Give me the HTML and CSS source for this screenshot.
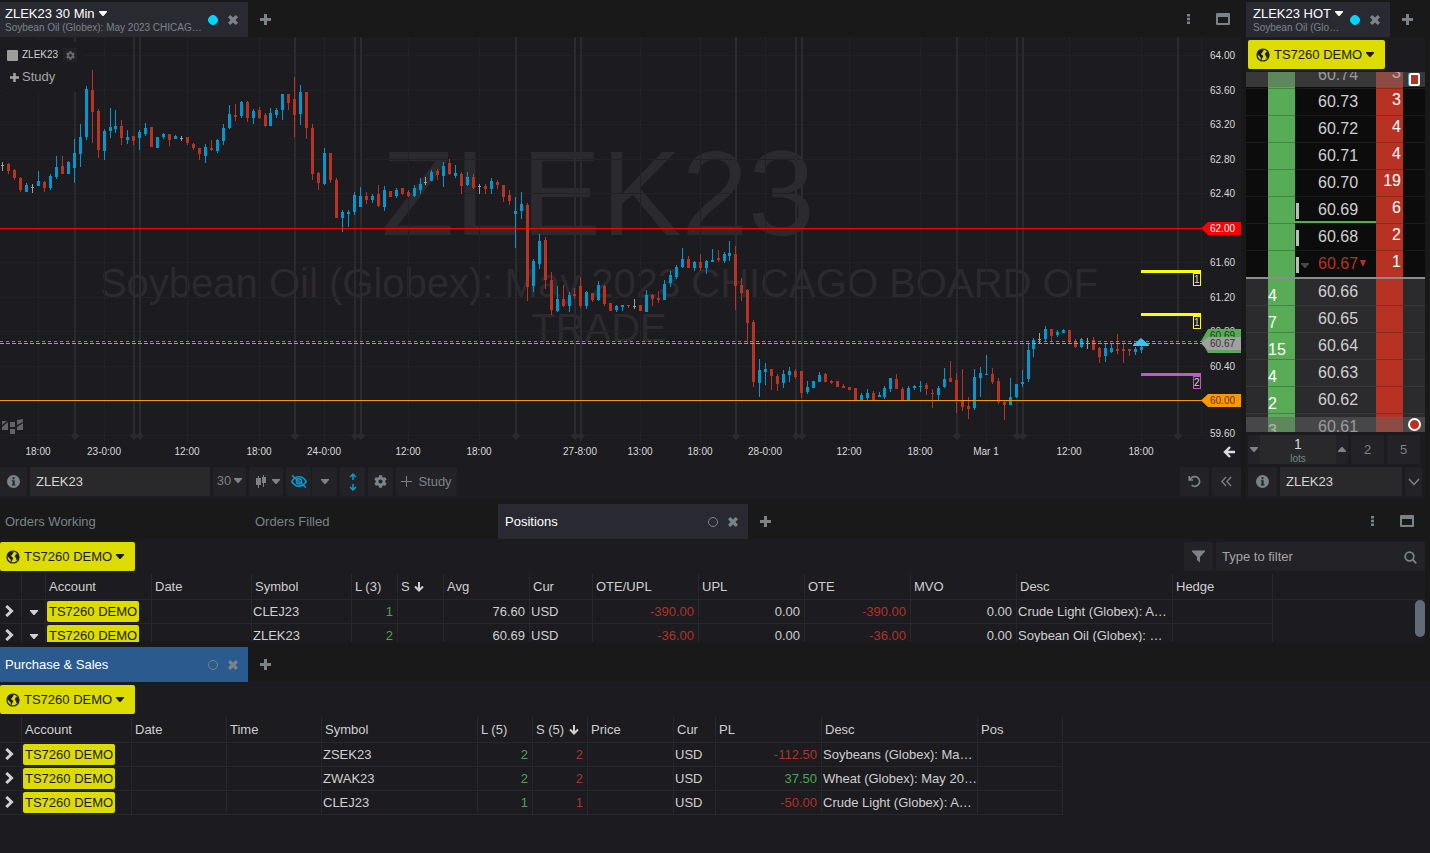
FILE: index.html
```html
<!DOCTYPE html>
<html lang="en">
<head>
    <meta charset="utf-8">
    <meta name="viewport" content="width=device-width, initial-scale=1.0">
    <title>ZLEK23 Workspace</title>
    <link rel="stylesheet" href="styles.css">
</head>

<body>
    <!-- shared icons -->
    <svg class="sprite" aria-hidden="true">
        <symbol id="i-caret" viewBox="0 0 8 5"><path d="M0 0h8v1L4.5 5h-1L0 1z"/></symbol>
        <symbol id="i-tick" viewBox="0 0 6 6"><path d="M0 0h6L3.500 6h-1z"/></symbol>
        <symbol id="i-close" viewBox="0 0 10 10"><path d="M2.2 0 5 2.6 7.8 0 10 2.2 7.4 5 10 7.8 7.8 10 5 7.4 2.2 10 0 7.8 2.6 5 0 2.2z"/></symbol>
        <symbol id="i-plus" viewBox="0 0 11 11"><path d="M4 0h3v4h4v3H7v4H4V7H0V4h4z"/></symbol>
        <symbol id="i-dots" viewBox="0 0 4 12"><path d="M0 1h3v2.500H0zM0 4.800h3v2.500H0zM0 8.500h3V11H0z"/></symbol>
        <symbol id="i-window" viewBox="0 0 14 12"><path fill-rule="evenodd" d="M1 0h12q1 0 1 1v10q0 1-1 1H1q-1 0-1-1V1q0-1 1-1zM2 4v6h10V4z"/></symbol>
        <symbol id="i-globe" viewBox="0 0 14 14"><circle cx="7" cy="7" r="6" fill="none" stroke="currentColor" stroke-width="1.200"/><path d="M2 3.500 4.600 1.400 7.200 1.600 7.600 2.800 6.400 4 5.800 5.300 4.500 6 6.300 7 7.300 8.300 6.400 9.800 5.500 12 4.800 11.400 4.500 9.200 2.800 7.800 1.300 5.800zM9.300 5l1.700-1.500 1.700 2 .1 2.400-1.500 2.300-.9-.3-.3-2-1.300-1.200z"/></symbol>
        <symbol id="i-gear" viewBox="0 0 512 512"><path d="M487.400 315.700l-42.600-24.600c4.300-23.200 4.300-47 0-70.200l42.600-24.600c4.900-2.800 7.100-8.600 5.500-14-11.100-35.600-30-67.800-54.700-94.600-3.800-4.100-10-5.100-14.800-2.300L380.800 110c-17.900-15.400-38.500-27.300-60.800-35.100V25.800c0-5.600-3.900-10.500-9.400-11.700-36.700-8.200-74.300-7.800-109.200 0-5.500 1.200-9.400 6.100-9.400 11.700V75c-22.200 7.900-42.800 19.800-60.800 35.100L88.700 85.500c-4.900-2.800-11-1.900-14.800 2.300-24.700 26.700-43.600 58.900-54.700 94.600-1.700 5.400.6 11.200 5.500 14L67.300 221c-4.300 23.200-4.300 47 0 70.200l-42.600 24.600c-4.900 2.800-7.100 8.600-5.500 14 11.100 35.600 30 67.800 54.700 94.600 3.800 4.100 10 5.100 14.800 2.300l42.600-24.600c17.900 15.400 38.500 27.300 60.800 35.100v49.200c0 5.600 3.900 10.500 9.400 11.700 36.700 8.200 74.300 7.800 109.200 0 5.500-1.200 9.400-6.100 9.400-11.700v-49.200c22.200-7.900 42.800-19.800 60.800-35.100l42.600 24.600c4.900 2.800 11 1.900 14.800-2.300 24.700-26.700 43.600-58.900 54.700-94.600 1.500-5.500-.7-11.300-5.600-14.100zM256 336c-44.100 0-80-35.900-80-80s35.900-80 80-80 80 35.900 80 80-35.900 80-80 80z"/></symbol>
        <symbol id="i-info" viewBox="0 0 13 13"><path fill-rule="evenodd" d="M6.500 0a6.500 6.500 0 1 1 0 13 6.500 6.500 0 0 1 0-13zM5.500 2.300v2h2v-2zM4.800 5.300v1h.8v3h-.8v1.200h3.600V9.300h-.8v-4z"/></symbol>
        <symbol id="i-candles" viewBox="0 0 10 13"><path d="M2 1h1v2h2v7H3v3H2v-3H0V3h2zM7 0h1v2h2v6H8v4H7V8H6V2h1z"/></symbol>
        <symbol id="i-eye" viewBox="0 0 16 13"><g fill="none" stroke="currentColor" stroke-width="1.600"><path d="M.8 6.500C3 2.900 5.300 1.800 8 1.800s5 1.100 7.200 4.700C13 10.100 10.700 11.200 8 11.200S3 10.100.8 6.500z"/><circle cx="8" cy="6.300" r="2.600"/><path d="M1 .5l14 12"/></g></symbol>
        <symbol id="i-updown" viewBox="0 0 8 18"><path d="M4 0l3.500 3.500-1 1L4.800 3v4H3.200V3L1.500 4.500l-1-1zM4 18l3.500-3.500-1-1L4.800 15v-4H3.200v4l-1.700-1.500-1 1z"/></symbol>
        <symbol id="i-undo" viewBox="0 0 13 13"><path d="M1.200 1v4h4M1.600 4.800C3 2.300 5.200 1.500 7.200 1.700a4.800 4.800 0 1 1-3.600 8.400" fill="none" stroke="currentColor" stroke-width="1.700"/></symbol>
        <symbol id="i-rewind" viewBox="0 0 11 10"><path d="M5 .5.900 5 5 9.500M10 .5 5.900 5 10 9.500" fill="none" stroke="currentColor" stroke-width="1.300"/></symbol>
        <symbol id="i-thin-plus" viewBox="0 0 11 11"><path d="M5 0h1v5h5v1H6v5H5V6H0V5h5z"/></symbol>
        <symbol id="i-chevron" viewBox="0 0 12 8"><path d="M1 1l5 5.500L11 1" fill="none" stroke="currentColor" stroke-width="1.500"/></symbol>
        <symbol id="i-expand" viewBox="0 0 9 12"><path d="M1.300 1l5.200 5-5.200 5" fill="none" stroke="currentColor" stroke-width="3"/></symbol>
        <symbol id="i-sort" viewBox="0 0 10 10"><path d="M5 0v8.500M1 4.500l4 4 4-4" fill="none" stroke="currentColor" stroke-width="2"/></symbol>
        <symbol id="i-filter" viewBox="0 0 13 12"><path d="M0 0h13v1L8 6.500V12L5 9.500v-3L0 1z"/></symbol>
        <symbol id="i-search" viewBox="0 0 13 13"><g fill="none" stroke="currentColor" stroke-width="1.800"><circle cx="5.500" cy="5.500" r="4.300"/><path d="M8.700 8.700 12.300 12.300"/></g></symbol>
    </svg>

    <div class="top">
        <section class="chart-panel">
            <div class="tabs">
                <div class="tab active">
                    <button class="tab-title">
                        <span>ZLEK23 30 Min <svg class="caret"><use href="#i-caret"/></svg></span>
                        <small>Soybean Oil (Globex): May 2023 CHICAGO BOARD OF TRADE</small>
                    </button>
                    <span class="link-dot on"></span>
                    <button class="close" aria-label="Close"><svg><use href="#i-close"/></svg></button>
                </div>
                <button class="add" aria-label="Add tab"><svg><use href="#i-plus"/></svg></button>
                <div class="tab-tools">
                    <button aria-label="More"><svg class="dots"><use href="#i-dots"/></svg></button>
                    <button aria-label="Window"><svg class="window"><use href="#i-window"/></svg></button>
                </div>
            </div>

            <div class="chart">
                <svg id="chart" viewBox="0 37 1241 427" role="img" aria-label="ZLEK23 30 minute chart"></svg>
                <div class="legend">
                    <div class="legend-symbol">
                        <span class="swatch"></span>ZLEK23
                        <button aria-label="Series settings"><svg><use href="#i-gear"/></svg></button>
                    </div>
                    <button class="legend-study"><svg><use href="#i-plus"/></svg>Study</button>
                </div>
            </div>

            <div class="toolbar">
                <button class="tool info" aria-label="Info"><svg><use href="#i-info"/></svg></button>
                <input class="symbol" type="text" value="ZLEK23" aria-label="Symbol">
                <button class="tool interval">30 <svg class="caret"><use href="#i-caret"/></svg></button>
                <button class="tool type" aria-label="Chart type"><svg class="candles"><use href="#i-candles"/></svg><svg class="caret"><use href="#i-caret"/></svg></button>
                <div class="split">
                    <button class="tool blue" aria-label="Hide drawings"><svg class="eye"><use href="#i-eye"/></svg></button>
                    <button class="tool" aria-label="Drawing options"><svg class="caret"><use href="#i-caret"/></svg></button>
                </div>
                <button class="tool small blue" aria-label="Fit scale"><svg class="updown"><use href="#i-updown"/></svg></button>
                <button class="tool small" aria-label="Settings"><svg><use href="#i-gear"/></svg></button>
                <button class="tool study"><svg class="thin"><use href="#i-thin-plus"/></svg>Study</button>
                <div class="toolbar-right">
                    <button class="tool" aria-label="Undo"><svg><use href="#i-undo"/></svg></button>
                    <button class="tool" aria-label="Collapse"><svg class="thin"><use href="#i-rewind"/></svg></button>
                </div>
            </div>
        </section>

        <section class="ladder-panel">
            <div class="tabs">
                <div class="tab active">
                    <button class="tab-title">
                        <span>ZLEK23 HOT <svg class="caret"><use href="#i-caret"/></svg></span>
                        <small>Soybean Oil (Globex): May 2023 CHICAGO BOARD OF TRADE</small>
                    </button>
                    <span class="link-dot on"></span>
                    <button class="close" aria-label="Close"><svg><use href="#i-close"/></svg></button>
                </div>
                <button class="add" aria-label="Add tab"><svg><use href="#i-plus"/></svg></button>
            </div>
            <div class="account-bar">
                <button class="account"><svg class="globe"><use href="#i-globe"/></svg>TS7260 DEMO<svg class="caret"><use href="#i-caret"/></svg></button>
            </div>
            <div class="ladder">
                <table><tbody id="ladder"></tbody></table>
                <div class="band band-top"><span class="mark-square"></span></div>
                <div class="band band-bottom"><span class="mark-round"></span></div>
            </div>
            <div class="toolbar lots-bar">
                <div class="lots">
                    <button aria-label="Fewer lots"><svg class="caret"><use href="#i-caret"/></svg></button>
                    <div class="lots-value"><b>1</b><small>lots</small></div>
                    <button aria-label="More lots"><svg class="caret up"><use href="#i-caret"/></svg></button>
                </div>
                <button class="tool">2</button>
                <button class="tool">5</button>
            </div>
            <div class="toolbar symbol-bar">
                <button class="tool" aria-label="Info"><svg><use href="#i-info"/></svg></button>
                <input class="symbol" type="text" value="ZLEK23" aria-label="Ladder symbol">
                <button class="tool expand" aria-label="Expand"><svg class="chevron"><use href="#i-chevron"/></svg></button>
            </div>
        </section>
    </div>

    <section class="positions">
        <div class="tabs">
            <div class="tab"><button class="tab-title">Orders Working</button></div>
            <div class="tab"><button class="tab-title">Orders Filled</button></div>
            <div class="tab active">
                <button class="tab-title">Positions</button>
                <span class="link-dot"></span>
                <button class="close" aria-label="Close"><svg><use href="#i-close"/></svg></button>
            </div>
            <button class="add" aria-label="Add tab"><svg><use href="#i-plus"/></svg></button>
            <div class="tab-tools">
                <button aria-label="More"><svg class="dots"><use href="#i-dots"/></svg></button>
                <button aria-label="Window"><svg class="window"><use href="#i-window"/></svg></button>
            </div>
        </div>
        <div class="account-bar">
            <button class="account"><svg class="globe"><use href="#i-globe"/></svg>TS7260 DEMO<svg class="caret"><use href="#i-caret"/></svg></button>
            <div class="filter">
                <button class="tool" aria-label="Filter"><svg><use href="#i-filter"/></svg></button>
                <div class="search">
                    <input type="text" placeholder="Type to filter" aria-label="Type to filter">
                    <svg><use href="#i-search"/></svg>
                </div>
            </div>
        </div>
        <div class="grid-view">
            <table class="grid">
                <colgroup>
                    <col class="w22"><col class="w24"><col class="w106"><col class="w100"><col class="w100"><col class="w46"><col class="w46"><col class="w86"><col class="w63"><col class="w106"><col class="w106"><col class="w106"><col class="w106"><col class="w156"><col class="w100"><col>
                </colgroup>
                <thead>
                    <tr><th></th><th></th><th>Account</th><th>Date</th><th>Symbol</th><th>L (3)</th><th>S <svg class="sort"><use href="#i-sort"/></svg></th><th>Avg</th><th>Cur</th><th>OTE/UPL</th><th>UPL</th><th>OTE</th><th>MVO</th><th>Desc</th><th>Hedge</th><th></th></tr>
                </thead>
                <tbody>
                    <tr>
                        <td><button class="row-open" aria-label="Expand"><svg><use href="#i-expand"/></svg></button></td>
                        <td><button class="row-menu" aria-label="Menu"><svg class="caret"><use href="#i-caret"/></svg></button></td>
                        <td><span class="tag">TS7260 DEMO</span></td><td></td><td>CLEJ23</td><td class="num up">1</td><td></td><td class="num">76.60</td><td>USD</td><td class="num down">-390.00</td><td class="num">0.00</td><td class="num down">-390.00</td><td class="num">0.00</td><td>Crude Light (Globex): April 2023</td><td></td><td></td>
                    </tr>
                    <tr>
                        <td><button class="row-open" aria-label="Expand"><svg><use href="#i-expand"/></svg></button></td>
                        <td><button class="row-menu" aria-label="Menu"><svg class="caret"><use href="#i-caret"/></svg></button></td>
                        <td><span class="tag">TS7260 DEMO</span></td><td></td><td>ZLEK23</td><td class="num up">2</td><td></td><td class="num">60.69</td><td>USD</td><td class="num down">-36.00</td><td class="num">0.00</td><td class="num down">-36.00</td><td class="num">0.00</td><td>Soybean Oil (Globex): May 2023</td><td></td><td></td>
                    </tr>
                </tbody>
            </table>
            <div class="scroll-thumb"></div>
        </div>
    </section>

    <section class="sales">
        <div class="tabs">
            <div class="tab focused">
                <button class="tab-title">Purchase &amp; Sales</button>
                <span class="link-dot"></span>
                <button class="close" aria-label="Close"><svg><use href="#i-close"/></svg></button>
            </div>
            <button class="add" aria-label="Add tab"><svg><use href="#i-plus"/></svg></button>
        </div>
        <div class="account-bar">
            <button class="account"><svg class="globe"><use href="#i-globe"/></svg>TS7260 DEMO<svg class="caret"><use href="#i-caret"/></svg></button>
        </div>
        <table class="grid">
            <colgroup>
                <col class="w22"><col class="w110"><col class="w95"><col class="w95"><col class="w156"><col class="w55"><col class="w55"><col class="w86"><col class="w42"><col class="w106"><col class="w156"><col class="w85"><col>
            </colgroup>
            <thead>
                <tr><th></th><th>Account</th><th>Date</th><th>Time</th><th>Symbol</th><th>L (5)</th><th>S (5) <svg class="sort"><use href="#i-sort"/></svg></th><th>Price</th><th>Cur</th><th>PL</th><th>Desc</th><th>Pos</th><th></th></tr>
            </thead>
            <tbody>
                <tr>
                    <td><button class="row-open" aria-label="Expand"><svg><use href="#i-expand"/></svg></button></td>
                    <td><span class="tag">TS7260 DEMO</span></td><td></td><td></td><td>ZSEK23</td><td class="num up">2</td><td class="num down">2</td><td></td><td>USD</td><td class="num down">-112.50</td><td>Soybeans (Globex): May 2023</td><td></td><td></td>
                </tr>
                <tr>
                    <td><button class="row-open" aria-label="Expand"><svg><use href="#i-expand"/></svg></button></td>
                    <td><span class="tag">TS7260 DEMO</span></td><td></td><td></td><td>ZWAK23</td><td class="num up">2</td><td class="num down">2</td><td></td><td>USD</td><td class="num up">37.50</td><td>Wheat (Globex): May 2023</td><td></td><td></td>
                </tr>
                <tr>
                    <td><button class="row-open" aria-label="Expand"><svg><use href="#i-expand"/></svg></button></td>
                    <td><span class="tag">TS7260 DEMO</span></td><td></td><td></td><td>CLEJ23</td><td class="num up">1</td><td class="num down">1</td><td></td><td>USD</td><td class="num down">-50.00</td><td>Crude Light (Globex): April 2023</td><td></td><td></td>
                </tr>
            </tbody>
        </table>
    </section>

    <script src="chart.js"></script>
</body>

</html>
```
FILE: styles.css
```css
* {
    box-sizing: border-box;
}

body {
    margin: 0;
    min-height: 100vh;
    padding-top: 2px;
    display: flex;
    flex-direction: column;
    background-color: #19191a;
    color: #d0d0d0;
    font-family: "Liberation Sans", Arial, sans-serif;
    font-size: 13px;
    line-height: 16px;
}

button, input {
    margin: 0;
    padding: 0;
    border: 0;
    background: none;
    color: inherit;
    font: inherit;
}

small {
    font-size: 10px;
    line-height: 12px;
}

svg {
    fill: currentColor;
    flex: none;
}

.sprite {
    display: none;
}

.caret {
    width: 8px;
    height: 5px;
}

/* ---------- tabs ---------- */

.tabs {
    display: flex;
    height: 35px;
    color: #7b8388;
}

.tab {
    display: flex;
    align-items: center;
    width: 250px;
    padding: 0 10px 0 7px;
}

.tab:first-child {
    width: 248px;
    padding-left: 5px;
}

.tab.active {
    background-color: #292932;
}

.tab.focused {
    background-color: #2b5a8f;
}

.tab-title {
    flex: 1;
    min-width: 0;
    text-align: left;
}

.active .tab-title, .focused .tab-title {
    color: #fff;
}

.tab-title span, .tab-title small {
    display: block;
    white-space: nowrap;
    overflow: hidden;
    text-overflow: ellipsis;
}

.tab-title small {
    color: #7b8388;
}

.tab-title .caret {
    margin: 0 0 2px 1px;
}

.link-dot {
    width: 10px;
    height: 10px;
    margin: 0 10px 0 6px;
    border: 1px solid #7b8388;
    border-radius: 50%;
}

.link-dot.on {
    border-color: #00d5ff;
    background-color: #00d5ff;
}

.close, .add, .tab-tools button {
    display: flex;
    align-items: center;
}

.close svg {
    width: 10px;
    height: 10px;
}

.add {
    padding: 0 12px 1px;
}

.add svg {
    width: 11px;
    height: 11px;
}

.tab-tools {
    display: flex;
    gap: 25px;
    margin-left: auto;
    padding: 0 11px 1px 0;
}

.dots {
    width: 4px;
    height: 12px;
}

.window {
    width: 14px;
    height: 12px;
}

/* ---------- chart ---------- */

.top {
    display: flex;
    gap: 5px;
    padding-right: 5px;
}

.chart-panel {
    flex: 1;
    min-width: 0;
}

.chart {
    position: relative;
    background-color: #1c1b1f;
}

#chart {
    display: block;
    width: 100%;
    font-size: 10px;
    fill: #dadada;
}

.mark-big, .mark-small {
    font-size: 120px;
    fill: #2b2a2e;
    text-anchor: middle;
}

.mark-small {
    font-size: 40px;
}

.time {
    text-anchor: middle;
}

.shape {
    shape-rendering: crispEdges;
}

.legend {
    position: absolute;
    left: 3px;
    top: 5px;
    width: 80px;
    height: 50px;
    padding: 6px 0 0 4px;
    background-color: #1c1b1f;
}

.legend-symbol {
    display: flex;
    align-items: center;
    height: 14px;
    font-size: 10px;
}

.swatch {
    width: 11px;
    height: 11px;
    margin-right: 4px;
    border-radius: 1px;
    background-color: #9d9d9d;
}

.legend-symbol button {
    display: flex;
    align-items: center;
    justify-content: center;
    width: 14px;
    height: 14px;
    margin-left: 5px;
    background-color: #222126;
    color: #66696d;
}

.legend-symbol svg, .legend-study svg {
    width: 9px;
    height: 9px;
}

.legend-study {
    display: flex;
    align-items: center;
    gap: 3px;
    padding: 7px 3px;
    color: #a5a5a5;
}

/* ---------- toolbars ---------- */

.toolbar {
    display: flex;
    gap: 3px;
    padding: 3px 0;
    background-color: #1c1b1f;
    color: #7b8388;
}

.tool {
    display: flex;
    align-items: center;
    justify-content: center;
    width: 29px;
    height: 29px;
    border-radius: 2px;
    background-color: #232227;
}

.tool svg {
    width: 13px;
    height: 13px;
}

.tool .caret {
    width: 8px;
    height: 5px;
}

.tool .eye {
    width: 16px;
}

.tool .updown {
    width: 8px;
    height: 18px;
}

.tool .candles {
    width: 10px;
}

.tool .thin {
    width: 11px;
    height: 11px;
}

.tool.info {
    width: 27px;
}

.tool.small, .split .tool {
    width: 25px;
}

.tool.interval {
    width: 33px;
    gap: 3px;
    padding-bottom: 2px;
}

.tool.type {
    width: 34px;
    gap: 6px;
    padding-left: 3px;
}

.tool.study {
    width: 61px;
    gap: 6px;
}

.blue {
    color: #0c99cd;
}

.split {
    display: flex;
    gap: 1px;
}

.toolbar-right {
    display: flex;
    gap: 3px;
    margin-left: auto;
}

.symbol {
    width: 180px;
    height: 29px;
    padding: 0 6px;
    border-radius: 1px;
    background-color: #29292b;
    color: #d5d5d5;
}

/* ---------- price ladder ---------- */

.ladder-panel {
    width: 179px;
    background-color: #1c1b1f;
}

.ladder-panel .tabs {
    background-color: #19191a;
}

.ladder-panel .tab {
    width: 144px;
    padding-left: 7px;
}

.account-bar {
    display: flex;
    padding: 3px 0;
    background-color: #1c1b1f;
}

.ladder-panel .account-bar {
    padding-left: 2px;
}

.account {
    display: flex;
    align-items: center;
    height: 29px;
    padding: 0 11px 0 6px;
    border-radius: 2px;
    background-color: #dcdc00;
    color: #1c1b1f;
}

.ladder-panel .account {
    padding-left: 8px;
}

.account .caret {
    margin-left: 4px;
}

.globe {
    width: 14px;
    height: 14px;
    margin-right: 4px;
}

.ladder {
    position: relative;
    height: 360px;
    overflow: hidden;
}

.ladder table {
    width: 100%;
    margin-top: -10px;
    table-layout: fixed;
    border-spacing: 0;
    font-size: 16px;
    line-height: 18px;
}

.ladder td {
    height: 27px;
    padding: 0;
    border-bottom: 1px solid #1b1b1d;
    background-color: #0c0c0d;
}

.ladder .bid-row td {
    border-color: #38383b;
    background-color: #2b2b2e;
}

.ladder .bid, .ladder .bid-row .bid {
    width: 27px;
    padding-top: 8px;
    border-color: #43863f;
    background-color: #57ac55;
    color: #fff;
}

.ladder .ask, .ladder .bid-row .ask {
    width: 27px;
    padding: 0 2px 5px 0;
    border-color: #8f281c;
    background-color: #b83223;
    color: #fff;
    text-align: right;
}

.ladder .price {
    position: relative;
    width: 81px;
    padding-left: 23px;
}

.ladder .volume {
    background-image: linear-gradient(#bbb, #bbb);
    background-position: 1px 6px;
    background-size: 3px 16px;
    background-repeat: no-repeat;
}

.ladder .high {
    box-shadow: inset 0 -2px #57ac55;
}

.ladder .last-row td {
    height: 28px;
    border-bottom: 2px solid #8c8c8c;
}

.ladder .last {
    color: #b83223;
}

.last .tick {
    width: 6px;
    height: 6px;
    margin: 0 0 3px 2px;
}

.last .caret {
    position: absolute;
    left: 6px;
    top: 12px;
    color: #45484b;
}

.band {
    position: absolute;
    left: 0;
    right: 0;
    height: 15px;
    background-color: rgba(100, 100, 100, 0.5);
}

.band-top {
    top: 0;
}

.band-bottom {
    bottom: 0;
}

.mark-square, .mark-round {
    position: absolute;
    right: 5px;
    top: 1px;
    width: 11px;
    height: 13px;
    border: 2px solid #fff;
    border-radius: 2px;
    background-color: #b83223;
    box-shadow: -1px 0 #2aa9c4;
}

.mark-round {
    right: 4px;
    width: 13px;
    border-radius: 50%;
    box-shadow: none;
}

.lots-bar, .symbol-bar {
    padding-left: 2px;
}

.symbol-bar {
    padding-top: 0;
}

.lots-bar .tool {
    width: 33px;
}

.lots {
    display: flex;
    width: 100px;
    height: 29px;
    border-radius: 2px;
    background-color: #232227;
}

.lots button {
    display: flex;
    align-items: center;
    justify-content: center;
    width: 12px;
}

.lots .up {
    transform: rotate(180deg);
}

.lots-value {
    display: flex;
    flex: 1;
    flex-direction: column;
    align-items: center;
    background-color: #29292b;
}

.lots-value b {
    height: 18px;
    color: #d5d5d5;
    font-size: 14px;
    font-weight: normal;
    line-height: 18px;
}

.symbol-bar .symbol {
    width: 122px;
}

.tool.expand {
    width: 17px;
}

.tool .chevron {
    width: 12px;
    height: 8px;
}

/* ---------- grids ---------- */

.positions, .sales {
    margin: 5px 5px 0 0;
}

.sales {
    flex: 1;
    display: flex;
    flex-direction: column;
    margin-right: 0;
    background-color: #1c1b1f;
}

.sales .tabs {
    background-color: #19191a;
}

.filter {
    display: flex;
    gap: 3px;
    margin-left: auto;
    color: #7b8388;
}

.search {
    position: relative;
}

.search input {
    width: 209px;
    height: 29px;
    padding: 0 30px 0 6px;
    border-radius: 2px;
    background-color: #232227;
}

.search input::placeholder {
    color: #a5a5a5;
    opacity: 1;
}

.search svg {
    position: absolute;
    right: 8px;
    top: 9px;
    width: 13px;
    height: 13px;
}

.grid-view {
    position: relative;
    height: 68px;
    overflow: hidden;
    background-color: #1c1b1f;
}

.scroll-thumb {
    position: absolute;
    right: 0;
    top: 26px;
    width: 10px;
    height: 37px;
    border-radius: 5px;
    background-color: #626c78;
}

.grid {
    width: 100%;
    table-layout: fixed;
    border-spacing: 0;
    white-space: nowrap;
}

.grid th {
    height: 26px;
    padding: 0 0 0 3px;
    border-right: 1px solid #28272b;
    border-bottom: 1px solid #28272b;
    font-weight: normal;
    text-align: left;
}

.grid td {
    height: 24px;
    padding: 0 0 0 1px;
    overflow: hidden;
    border-right: 1px solid #28272b;
    border-bottom: 1px solid #28272b;
    text-overflow: ellipsis;
}

.grid th:last-child {
    border-right: 0;
}

.grid td:last-child {
    border: 0;
}

.grid .num {
    padding-right: 4px;
    text-align: right;
}

.grid .up {
    color: #4ea552;
}

.grid .down {
    color: #b03325;
}

.tag {
    display: block;
    width: 92px;
    height: 21px;
    padding: 0 2px;
    border-radius: 2px;
    background-color: #dcdc00;
    color: #1c1b1f;
    line-height: 21px;
}

.sort {
    width: 10px;
    height: 10px;
    margin: 0 0 -1px 1px;
}

.row-open, .row-menu {
    display: flex;
    padding: 0 0 2px 4px;
}

.row-open svg {
    width: 9px;
    height: 12px;
}

.row-menu {
    padding: 2px 0 0 7px;
}

.w22 { width: 22px; }
.w24 { width: 24px; }
.w42 { width: 42px; }
.w46 { width: 46px; }
.w55 { width: 55px; }
.w63 { width: 63px; }
.w85 { width: 85px; }
.w86 { width: 86px; }
.w95 { width: 95px; }
.w100 { width: 100px; }
.w106 { width: 106px; }
.w110 { width: 110px; }
.w156 { width: 156px; }
```
FILE: chart.js
```js
var BLUE = "#0398cd", RED = "#b73323", GREY = "#a0a0a0";

// x, high, low, body top, body bottom, direction (b = up, r = down, g = unchanged)
var candles = `
2 162 171 165 166 g|8 163 174 164 171 r|14 169 180 170 178 r|20 177 192 178 190 r|26 183 192 185 192 b
32 184 193 187 188 g|38 171 186 181 186 b|44 181 192 182 188 r|50 174 190 176 188 b|56 156 179 167 177 b
62 156 174 166 174 r|68 161 174 162 174 b|74 139 183 153 168 b|80 124 167 137 154 b|86 86 140 89 137 b
92 70 143 90 112 r|98 109 158 111 150 r|104 129 160 131 151 b|110 108 138 127 131 b|115 110 133 126 129 b
121 120 145 126 138 r|127 130 144 137 140 b|133 136 145 136 141 r|139 130 150 132 138 b|145 123 136 128 134 b
151 127 147 127 147 r|157 137 148 137 148 b|163 133 139 134 137 b|169 134 146 134 140 r|175 135 139 136 139 b
181 136 141 138 139 g|187 137 145 137 143 r|193 143 150 144 148 r|199 148 160 148 154 r|205 144 163 147 156 b
211 140 151 148 150 r|217 139 153 140 151 b|223 124 145 128 141 b|229 105 129 114 128 b|235 104 121 115 117 r
241 101 118 102 116 b|247 101 122 102 118 r|253 109 124 111 118 b|259 107 119 110 118 r|265 113 127 115 126 r
270 108 126 113 126 b|276 108 118 110 115 b|282 94 120 94 110 b|288 94 110 94 103 r|294 77 137 99 115 r
300 85 125 92 114 b|306 92 139 92 128 r|312 124 180 128 174 r|318 172 190 173 183 r|324 148 185 153 184 b
330 153 183 153 180 r|336 178 218 180 218 r|342 210 232 212 218 b|348 210 227 212 214 b|354 192 215 195 212 b
360 187 207 196 207 b|366 192 204 196 200 r|372 194 203 196 200 b|378 185 207 194 206 r|384 186 211 190 207 b
390 191 197 191 197 r|396 188 198 190 196 b|402 188 195 188 194 r|408 190 197 192 196 r|414 185 197 188 196 b
420 178 194 184 190 b|425 177 185 182 183 g|431 170 181 172 181 b|437 169 180 171 175 r|443 162 187 166 176 b
449 159 175 163 174 r|455 165 178 173 176 b|461 172 194 174 186 r|467 172 186 177 185 b|473 174 189 177 188 r
479 184 194 186 187 g|485 184 194 186 189 r|491 178 194 181 189 b|497 180 189 182 185 r|503 185 202 185 197 r
509 190 205 195 201 r|515 197 248 211 214 b|521 192 219 204 211 b|527 203 301 205 287 r|533 259 292 261 286 b
539 234 269 241 264 b|545 237 289 240 280 r|551 272 315 280 310 r|557 286 312 299 311 b|563 285 307 299 306 r
569 292 312 295 306 b|574 288 299 294 296 r|580 277 308 286 306 r|586 291 309 292 306 b|592 293 302 293 300 r
598 281 301 285 300 b|604 285 306 286 304 r|610 303 311 303 311 r|616 305 312 306 310 b|622 305 311 305 307 b
628 305 308 305 306 r|634 299 309 306 307 g|640 305 311 305 311 r|646 290 312 295 312 b|652 294 306 295 299 r
658 291 303 298 300 r|664 280 300 284 300 b|670 271 287 275 283 b|676 265 279 267 277 b|682 248 268 259 267 b
688 256 268 259 268 r|694 261 271 262 268 b|700 254 271 262 268 r|706 260 274 261 268 b|712 249 262 260 262 b
718 250 262 258 260 r|724 252 263 254 261 b|729 241 261 253 256 b|735 246 310 254 286 r|741 278 301 285 293 r
747 289 344 290 323 r|753 320 387 322 382 r|759 359 397 370 383 b|765 363 385 369 372 b|771 369 390 369 376 r
777 374 391 376 384 r|783 370 388 374 383 b|789 367 382 371 375 b|795 369 379 371 377 r|801 371 398 371 393 r
807 381 394 387 392 b|813 381 388 381 388 b|819 372 382 375 382 b|825 373 382 374 382 r|831 380 384 381 383 r
837 381 387 381 387 r|843 384 388 386 388 r|849 387 390 387 390 r|855 388 400 388 400 r|861 393 400 395 400 b
867 389 400 393 398 b|873 391 401 393 400 r|879 392 397 395 397 b|884 386 399 388 397 b|890 378 392 378 389 b
896 374 389 379 389 r|902 387 400 389 400 r|908 386 400 388 400 b|914 385 390 386 388 b|920 381 392 386 387 b
926 383 395 385 389 r|932 389 408 393 394 r|938 386 400 388 395 b|944 368 388 379 387 b|950 361 382 378 382 r
956 373 413 380 400 r|962 369 411 400 407 r|968 397 419 406 409 r|974 369 410 377 408 b|980 367 397 373 378 b
986 355 375 374 375 b|992 368 384 374 382 r|998 378 404 381 402 r|1004 400 420 402 405 r|1010 378 405 397 405 b
1016 384 398 384 397 b|1022 370 387 382 384 b|1028 344 382 350 379 b|1033 338 357 340 349 b|1039 333 344 339 340 g
1045 326 342 329 339 b|1051 329 342 329 336 r|1057 330 337 332 335 b|1063 329 333 330 333 b|1069 330 343 330 342 r
1075 339 348 342 347 r|1081 338 348 339 347 b|1087 338 349 343 344 g|1093 337 350 340 350 r|1099 347 363 348 357 r
1105 344 362 348 356 b|1111 344 353 348 352 b|1117 334 354 349 351 r|1123 344 363 349 351 r|1129 349 356 349 351 r
1135 347 355 349 352 b|1141 345 353 347 350 b`.trim().split(/[|\n]/);

var times = [[38, "18:00"], [104, "23-0:00"], [187, "12:00"], [259, "18:00"], [324, "24-0:00"], [408, "12:00"],
    [479, "18:00"], [580, "27-8:00"], [640, "13:00"], [700, "18:00"], [765, "28-0:00"], [849, "12:00"],
    [920, "18:00"], [986, "Mar 1"], [1069, "12:00"], [1141, "18:00"]];
var sessions = [74, 133, 139, 294, 354, 360, 515, 574, 580, 735, 795, 801, 956, 1016, 1022, 1177];

function rect(x, y, w, h, fill) {
    return `<rect class="shape" x="${x}" y="${y}" width="${w}" height="${h}" fill="${fill}"/>`;
}

function text(x, y, value, cls, fill) {
    return `<text x="${x}" y="${y}" class="${cls || ""}"${fill ? ` style="fill:${fill}"` : ""}>${value}</text>`;
}

// arrow shaped label on the price axis
function flag(y1, y2, fill) {
    return `<path d="M1201 ${(y1 + y2) / 2}L1208 ${y1}H1241V${y2}H1208z" fill="${fill}"/>`;
}

function order(y, qty, color) {
    return rect(1141, y, 60, 3, color) +
        `<rect class="shape" x="1193.5" y="${y + 3.5}" width="7" height="12" fill="#1c1b1f" stroke="${color}"/>` +
        text(1194, y + 13, qty);
}

var out = text(598, 235, "ZLEK23", "mark-big") +
    text(599, 297, "Soybean Oil (Globex): May 2023 CHICAGO BOARD OF", "mark-small") +
    text(599, 342, "TRADE", "mark-small");

for (var i = 0; i <= 11; i++) {
    var y = Math.round(55 + i * 34.5);
    out += rect(0, y, 1207, 1, "#222224");
    out += text(1210, (i == 11 ? 433 : y) + 4, (64 - i * 0.4).toFixed(2));
}
times.forEach(function (t) {
    out += rect(t[0], 37, 1, 407, "#222224") + text(t[0], 455, t[1], "time");
});
out += rect(1201, 37, 1, 400, "#222224");
sessions.forEach(function (x) {
    out += rect(x, 37, 2, 398, "#2b2a2e") + `<path d="M${x + 1} 432l4 4-4 4-4-4z" fill="#2b2a2e"/>`;
});

candles.forEach(function (line) {
    var c = line.split(" ").map(function (v, i) { return i < 5 ? +v : v; });
    var color = { b: BLUE, r: RED, g: GREY }[c[5]];
    out += rect(c[0], c[1], 1, c[2] - c[1], color) + rect(c[0] - 1, c[3], 3, Math.max(1, c[4] - c[3]), color);
});

// price levels
out += rect(0, 228, 1204, 1, "#f00") + rect(0, 400, 1204, 1, "#ff9800");
out += '<path class="shape" d="M0 341.5H1204" stroke="#57ac55" stroke-dasharray="3 3"/>';
out += '<path class="shape" d="M0 343.5H1204" stroke="#a0a0a0" stroke-dasharray="4 2"/>';
out += flag(222, 235, "#f00") + text(1210, 232, "62.00", "", "#fff");
out += flag(329, 353, "#57ac55") + text(1210, 339, "60.69", "", "#1c3a1c");
out += flag(337, 350, "#a0a0a0") + text(1210, 347, "60.67", "", "#333");
out += flag(394, 407, "#ff9800") + text(1210, 404, "60.00", "", "#5c3a0a");
out += order(270, 1, "#ff0") + order(313, 1, "#ff0") + order(373, 2, "#c05ac0");
out += '<path d="M1141 338l8 7v1h-16v-1z" fill="#38c3fc"/>';

// back arrow and vendor mark
out += '<path d="M1230 447l-5 5 5 5M1225 452h10" fill="none" stroke="#ddd" stroke-width="2.4"/>';
out += '<path d="M2 421h5l-5 4zM8 422v8H2v-3zM10 422h5v5h-5zM10 429h5v5h-5zM17 420l6-1v3l-6 3zM17 427l6-4v7h-6z" fill="#636366"/>';

document.getElementById("chart").innerHTML = out;

// depth of market: price, bid size, ask size
var rows = [[60.74, "", 3], [60.73, "", 3], [60.72, "", 4], [60.71, "", 4], [60.70, "", 19], [60.69, "", 6],
    [60.68, "", 2], [60.67, "", 1], [60.66, 4, ""], [60.65, 7, ""], [60.64, 15, ""], [60.63, 4, ""],
    [60.62, 2, ""], [60.61, 3, ""]];

document.getElementById("ladder").innerHTML = rows.map(function (r) {
    var last = r[0] == 60.67;
    var cls = "price" + (r[0] > 60.66 && r[0] < 60.70 ? " volume" : "") + (r[0] == 60.69 ? " high" : "") + (last ? " last" : "");
    var extra = last ? '<svg class="tick"><use href="#i-tick"/></svg><svg class="caret"><use href="#i-caret"/></svg>' : "";
    return `<tr class="${last ? "last-row" : r[0] < 60.67 ? "bid-row" : ""}"><td></td><td class="bid">${r[1]}</td>` +
        `<td class="${cls}">${r[0].toFixed(2)}${extra}</td><td class="ask">${r[2]}</td><td></td></tr>`;
}).join("");
```
